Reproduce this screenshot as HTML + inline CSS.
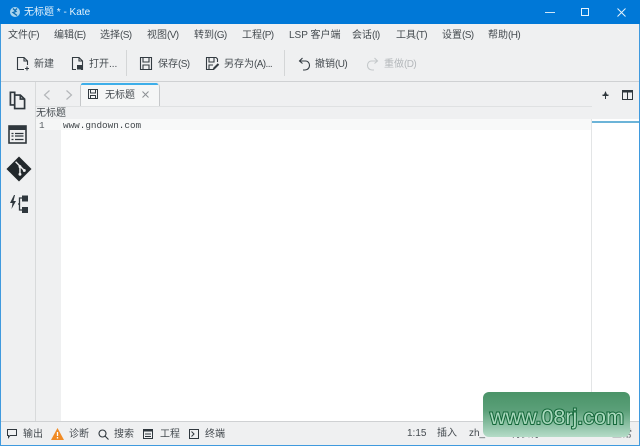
<!DOCTYPE html>
<html><head><meta charset="utf-8">
<style>
html,body{margin:0;padding:0;width:640px;height:446px;overflow:hidden;background:#eff0f1}
body{position:relative;font-family:"Liberation Sans","Noto Sans CJK SC",sans-serif;font-size:10px;color:#454b50}
.t{position:absolute;white-space:nowrap;line-height:14px;top:0}
.a{position:absolute}
i{font-style:normal;letter-spacing:-.6px}
svg{position:absolute;overflow:visible}
</style></head><body>
<!-- editor -->
<div class="a" style="left:1px;top:81px;width:638px;height:1px;background:#cfd1d3"></div>
<div class="a" style="left:35px;top:82px;width:1px;height:339px;background:#d8dadb"></div>
<div class="a" style="left:36px;top:107px;width:25px;height:314px;background:#eff0f1"></div>
<div class="a" style="left:61px;top:119px;width:530px;height:302px;background:#fff"></div>
<div class="a" style="left:36px;top:119px;width:25px;height:11px;background:#f5f6f6"></div>
<div class="a" style="left:61px;top:119px;width:530px;height:11px;background:#f8f9f9"></div>
<div class="a" style="left:591px;top:119px;width:1px;height:302px;background:#e3e5e6"></div>
<div class="a" style="left:592px;top:119px;width:47px;height:302px;background:#fff"></div>
<div class="a" style="left:592px;top:121px;width:47px;height:2px;background:#6cb4d8"></div>
<div class="a" style="left:36px;top:106px;width:556px;height:1px;background:#dfe1e2"></div>
<!-- title -->
<div class="a" style="left:0;top:0;width:640px;height:24px;background:#0078d7"></div>
<svg style="left:9px;top:6px" width="12" height="12" viewBox="0 0 12 12"><circle cx="6" cy="6" r="5" fill="#a9d4ee"/><path d="M4 2.500l3 3-3 1 4 3M8 2.500L5.500 5" stroke="#0a6cb5" stroke-width="1.300" fill="none"/></svg>
<div class="t" style="left:24px;top:6px;color:#e4f2fb;font-size:10px;line-height:14px">无标题 * - Kate</div>
<div class="a" style="left:545px;top:12px;width:10px;height:1px;background:#cfe6f7"></div>
<div class="a" style="left:581px;top:8px;width:6px;height:6px;border:1px solid #e6f3fc"></div>
<svg style="left:617px;top:8px" width="9" height="9"><path d="M.5 .5l8 8M8.500 .5l-8 8" stroke="#e6f3fc" stroke-width="1"/></svg>
<!-- menu -->
<div class="t" style="left:8px;top:29px">文件<i>(F)</i></div>
<div class="t" style="left:54px;top:29px">编辑<i>(E)</i></div>
<div class="t" style="left:100px;top:29px">选择<i>(S)</i></div>
<div class="t" style="left:147px;top:29px">视图<i>(V)</i></div>
<div class="t" style="left:194px;top:29px">转到<i>(G)</i></div>
<div class="t" style="left:242px;top:29px">工程<i>(P)</i></div>
<div class="t" style="left:289px;top:29px">LSP 客户端</div>
<div class="t" style="left:352px;top:29px">会话<i>(I)</i></div>
<div class="t" style="left:396px;top:29px">工具<i>(T)</i></div>
<div class="t" style="left:442px;top:29px">设置<i>(S)</i></div>
<div class="t" style="left:488px;top:29px">帮助<i>(H)</i></div>
<!-- toolbar -->
<svg style="left:16px;top:56px" width="14" height="15" fill="none" stroke="#333b41" stroke-width="1.100"><path d="M8 13.500H1.500V1.500H8L11.500 5V9M8 1.500V5H11.500M11 10.500V14.500M9 12.500H13"/></svg>
<div class="t" style="left:34px;top:58px">新建</div>
<svg style="left:71px;top:56px" width="14" height="15" fill="none" stroke="#333b41" stroke-width="1.100"><path d="M5 13.500H1.500V1.500H8L11.500 5V13.500H10M8 1.500V5H11.500"/><rect x="6" y="9" width="5" height="4.500" fill="#333b41" stroke="none"/></svg>
<div class="t" style="left:89px;top:58px">打开...</div>
<div class="a" style="left:126px;top:50px;width:1px;height:26px;background:#d4d6d7"></div>
<svg style="left:139px;top:56px" width="14" height="15" fill="none" stroke="#333b41" stroke-width="1.100"><path d="M1.500 1.500H12.500V13.500H1.500ZM4 1.500V6H10V1.500M4 13.500V9H10V13.500"/></svg>
<div class="t" style="left:158px;top:58px">保存<i>(S)</i></div>
<svg style="left:205px;top:56px" width="15" height="15" fill="none" stroke="#333b41" stroke-width="1.100"><path d="M9 13.500H1.500V1.500H11L12.500 3V6M4 1.500V6H9V1.500M4 13.500V9H8"/><path d="M8.500 13L13.500 8" stroke-width="2"/></svg>
<div class="t" style="left:224px;top:58px">另存为<i>(A)...</i></div>
<div class="a" style="left:284px;top:50px;width:1px;height:26px;background:#d4d6d7"></div>
<svg style="left:298px;top:57px" width="13" height="14" fill="none" stroke="#333b41" stroke-width="1.100"><path d="M4.500 1L1.500 4L4.500 6.500M2 4H7.500C10 4 11.500 6 11.500 8.500C11.500 11 9.500 13 7 13H5"/></svg>
<div class="t" style="left:315px;top:58px">撤销<i>(U)</i></div>
<svg style="left:366px;top:57px" width="13" height="14" fill="none" stroke="#c4c8ca" stroke-width="1.100"><path d="M8.500 1L11.500 4L8.500 6.500M11 4H5.500C3 4 1.500 6 1.500 8.500C1.500 11 3.500 13 6 13H8"/></svg>
<div class="t" style="left:384px;top:58px;color:#b4b8bb">重做<i>(D)</i></div>
<!-- side icons -->
<svg style="left:9px;top:91px" width="17" height="18" viewBox="0 0 18 20" preserveAspectRatio="none" fill="none" stroke="#2f373d" stroke-width="1.800"><path d="M6 4V1.500H1.500V15.500H6"/><path d="M6 4.500H12L16.500 9V19.500H6ZM12 4.500V9H16.500"/></svg>
<svg style="left:8px;top:125px" width="19" height="19"><rect x="1" y="1" width="17" height="17" fill="none" stroke="#2f373d" stroke-width="1.600"/><rect x="1" y="1" width="17" height="4" fill="#2f373d"/><path d="M3.500 8.500h2M7 8.500h8.500M3.500 11h2M7 11h8.500M3.500 14.500h2M7 14.500h8.500" stroke="#2f373d" stroke-width="1.200"/></svg>
<svg style="left:6px;top:156px" width="26" height="26" viewBox="0 0 27 27"><path d="M13.500 0.500L26.500 13.500L13.500 26.500L0.500 13.500Z" fill="#22282c"/><path d="M10 6L14.500 10.500M14.500 10.500V19M14.500 10.500L19 15" stroke="#eff0f1" stroke-width="1.500" fill="none"/><circle cx="14.500" cy="11" r="1.500" fill="#eff0f1"/><circle cx="14.500" cy="19" r="1.500" fill="#eff0f1"/><circle cx="19" cy="15" r="1.500" fill="#eff0f1"/></svg>
<svg style="left:9px;top:194px" width="20" height="20"><path d="M5 1L1 9H3.500L2.500 15L7 7H4.500L6 1Z" fill="#2f373d"/><path d="M14 4H10.500V16H14M10.500 10H9" fill="none" stroke="#2f373d" stroke-width="1.300"/><rect x="13" y="1.500" width="6" height="6" fill="#2f373d"/><rect x="13" y="13" width="6" height="6" fill="#2f373d"/></svg>
<!-- tab bar -->
<svg style="left:42px;top:89px" width="10" height="12" fill="none" stroke="#b3b6b9" stroke-width="1.200"><path d="M7.500 1.500L2.500 6L7.500 10.500"/></svg>
<svg style="left:64px;top:89px" width="10" height="12" fill="none" stroke="#b3b6b9" stroke-width="1.200"><path d="M2.500 1.500L7.500 6L2.500 10.500"/></svg>
<div class="a" style="left:80px;top:83px;width:78px;height:23px;background:#f5f6f6;border-left:1px solid #c6c8ca;border-right:1px solid #c6c8ca;border-radius:4px 4px 0 0"></div>
<div class="a" style="left:81px;top:83px;width:77px;height:2px;background:#3daee9;border-radius:2px 2px 0 0"></div>
<svg style="left:88px;top:89px" width="10" height="10" fill="none" stroke="#333b41" stroke-width="1"><path d="M.5 .5H9.500V9.500H.5ZM2.500 .5V4H7.500V.5M2.500 9.500V6.500H7.500V9.500"/></svg>
<div class="t" style="left:105px;top:89px">无标题</div>
<svg style="left:142px;top:91px" width="7" height="7"><path d="M.5 .5l6 6M6.500 .5l-6 6" stroke="#8c9094" stroke-width="1"/></svg>
<svg style="left:602px;top:91px" width="7" height="8"><path d="M3.500 0L5 3.500H6.500V5H4V8H3V5H.5V3.500H2Z" fill="#2f373d"/></svg>
<svg style="left:622px;top:90px" width="11" height="10" fill="none" stroke="#2f373d" stroke-width="1"><path d="M.5 .5H10.500V9.500H.5ZM5.500 .5V9.500"/><path d="M.5 1.500H10.500" stroke-width="2"/></svg>
<div class="t" style="left:36px;top:107px;line-height:13px">无标题</div>
<div class="t" style="left:39px;top:120px;font:9.300px/12px 'Liberation Mono',monospace;color:#555b60">1</div>
<div class="t" style="left:63px;top:120px;font:9.300px/12px 'Liberation Mono',monospace;color:#40464a">www.gndown.com</div>
<!-- status -->
<div class="a" style="left:1px;top:421px;width:638px;height:1px;background:#cfd1d3"></div>
<svg style="left:7px;top:429px" width="11" height="10" fill="none" stroke="#2f373d" stroke-width="1"><path d="M.5 .5H9.500V6.500H3L1.500 8.500V6.500H.5Z"/></svg>
<div class="t" style="left:23px;top:428px">输出</div>
<svg style="left:51px;top:428px" width="13" height="12"><path d="M6.500 0L13 12H0Z" fill="#f08a24"/><path d="M6.500 4V8M6.500 9V10.500" stroke="#fff" stroke-width="1.300"/></svg>
<div class="t" style="left:69px;top:428px">诊断</div>
<svg style="left:98px;top:429px" width="11" height="11" fill="none" stroke="#2f373d" stroke-width="1.100"><circle cx="4.500" cy="4.500" r="3.500"/><path d="M7 7L10.500 10.500"/></svg>
<div class="t" style="left:114px;top:428px">搜索</div>
<svg style="left:143px;top:429px" width="10" height="10"><rect x=".5" y=".5" width="9" height="9" fill="none" stroke="#2f373d"/><rect x="0" y="0" width="10" height="2.500" fill="#2f373d"/><path d="M2 5h6M2 7.500h6" stroke="#2f373d"/></svg>
<div class="t" style="left:160px;top:428px">工程</div>
<svg style="left:189px;top:429px" width="10" height="10" fill="none" stroke="#2f373d"><rect x=".5" y=".5" width="9" height="9"/><path d="M2.500 2.500L5 5L2.500 7.500"/></svg>
<div class="t" style="left:205px;top:428px">终端</div>
<div class="t" style="left:407px;top:427px">1:15</div>
<div class="t" style="left:437px;top:427px">插入</div>
<div class="t" style="left:469px;top:427px">zh_CN</div>
<div class="t" style="left:510px;top:428px">制表符: 4</div>
<div class="t" style="left:574px;top:428px">UTF-8</div>
<div class="t" style="left:612px;top:428px">正常</div>
<!-- window border -->
<div class="a" style="left:0;top:24px;width:1px;height:422px;background:#3f9ade"></div>
<div class="a" style="left:639px;top:24px;width:1px;height:422px;background:#3f9ade"></div>
<div class="a" style="left:0;top:445px;width:640px;height:1px;background:#3f9ade"></div>
<!-- watermark -->
<div class="a" style="left:483px;top:392px;width:147px;height:45px;border-radius:6px;background:linear-gradient(#4a9368,#5a9f78 40%,#b5dcc8)"></div>
<div class="t" style="left:490px;top:405px;width:134px;text-align:center;font:21.500px/24px 'Liberation Sans',sans-serif;color:#a8d8bc;-webkit-text-stroke:2px #14683a;paint-order:stroke fill">www.08rj.com</div>
</body></html>
